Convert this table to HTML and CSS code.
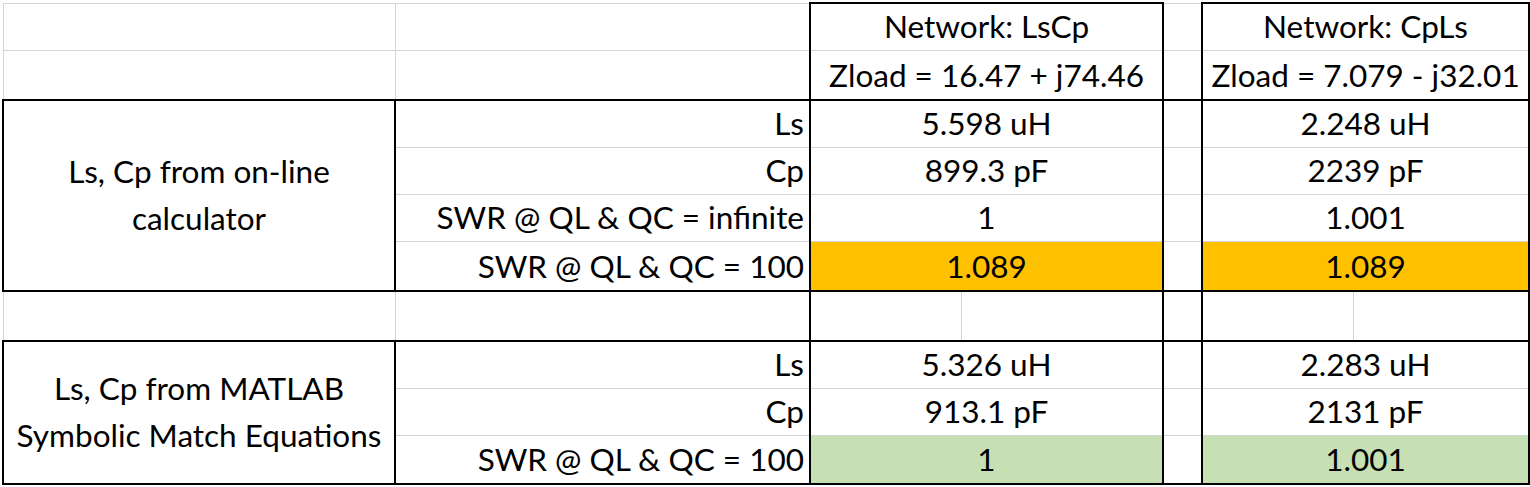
FILE: index.html
```html
<!DOCTYPE html>
<html lang="en">
<head>
<meta charset="utf-8">
<title>LsCp / CpLs match network comparison</title>
<link rel="stylesheet" href="styles.css">
</head>
<body>
<table class="sheet">
  <colgroup>
    <col class="col-a"><col class="col-b"><col class="col-c1"><col class="col-c2"><col class="col-d"><col class="col-e1"><col class="col-e2">
  </colgroup>
  <tbody>
    <tr class="h47">
      <td></td><td></td>
      <td colspan="2" class="val bx-top bx-side">Network: LsCp</td>
      <td></td>
      <td colspan="2" class="val bx-top bx-side">Network: CpLs</td>
    </tr>
    <tr class="h50 rule-bottom">
      <td></td><td></td>
      <td colspan="2" class="val bx-side">Zload = 16.47 + j74.46</td>
      <td></td>
      <td colspan="2" class="val bx-side">Zload = 7.079 - j32.01</td>
    </tr>
    <tr class="h47">
      <td rowspan="4" class="group">Ls, Cp from on-line<br>calculator</td>
      <td class="lbl">Ls</td>
      <td colspan="2" class="val bx-side">5.598 uH</td>
      <td></td>
      <td colspan="2" class="val bx-side">2.248 uH</td>
    </tr>
    <tr class="h47">
      <td class="lbl">Cp</td>
      <td colspan="2" class="val bx-side">899.3 pF</td>
      <td></td>
      <td colspan="2" class="val bx-side">2239 pF</td>
    </tr>
    <tr class="h47">
      <td class="lbl">SWR @ QL &amp; QC = infinite</td>
      <td colspan="2" class="val bx-side">1</td>
      <td></td>
      <td colspan="2" class="val bx-side">1.001</td>
    </tr>
    <tr class="h50 rule-bottom">
      <td class="lbl">SWR @ QL &amp; QC = 100</td>
      <td colspan="2" class="val bx-side fill-orange">1.089</td>
      <td></td>
      <td colspan="2" class="val bx-side fill-orange">1.089</td>
    </tr>
    <tr class="h50 rule-bottom">
      <td></td><td></td>
      <td class="bx-left"></td><td class="bx-right"></td>
      <td></td>
      <td class="bx-left"></td><td class="bx-right"></td>
    </tr>
    <tr class="h47">
      <td rowspan="3" class="group">Ls, Cp from MATLAB<br>Symbolic Match Equations</td>
      <td class="lbl">Ls</td>
      <td colspan="2" class="val bx-side">5.326 uH</td>
      <td></td>
      <td colspan="2" class="val bx-side">2.283 uH</td>
    </tr>
    <tr class="h47">
      <td class="lbl">Cp</td>
      <td colspan="2" class="val bx-side">913.1 pF</td>
      <td></td>
      <td colspan="2" class="val bx-side">2131 pF</td>
    </tr>
    <tr class="h49 rule-bottom">
      <td class="lbl">SWR @ QL &amp; QC = 100</td>
      <td colspan="2" class="val bx-side fill-green">1</td>
      <td></td>
      <td colspan="2" class="val bx-side fill-green">1.001</td>
    </tr>
  </tbody>
</table>
</body>
</html>
```

FILE: styles.css
```css
html, body {
  margin: 0;
  padding: 0;
  background: #ffffff;
}

body {
  padding: 2px 0 0 2px;
}

.sheet {
  border-collapse: collapse;
  table-layout: fixed;
  width: 1526px;
  font-family: "Lato", "Liberation Sans", sans-serif;
  font-size: 31.5px;
  color: #000000;
}

.col-a { width: 392px; }
.col-b { width: 415px; }
.col-c1 { width: 151px; }
.col-c2 { width: 202px; }
.col-d { width: 39px; }
.col-e1 { width: 151px; }
.col-e2 { width: 176px; }

.sheet td {
  box-sizing: border-box;
  border: 1px solid #d4d4d4;
  padding: 0 5px 6px 5px;
  line-height: 36px;
  vertical-align: bottom;
  white-space: nowrap;
  overflow: hidden;
}

.h47 td { height: 47px; }
.h49 td { height: 49px; }
.h50 td { height: 50px; }

.sheet .val {
  text-align: center;
}

.sheet .lbl {
  text-align: right;
  border-right: 2px solid #000000;
}

.sheet .group {
  text-align: center;
  vertical-align: middle;
  line-height: 47px;
  padding: 0 4px 2px 4px;
  border: 2px solid #000000;
}

.sheet .bx-top { border-top: 2px solid #000000; }
.sheet .bx-side { border-left: 2px solid #000000; border-right: 2px solid #000000; }
.sheet .bx-left { border-left: 2px solid #000000; }
.sheet .bx-right { border-right: 2px solid #000000; }

.sheet .rule-bottom td { border-bottom: 2px solid #000000; }

.fill-orange { background: #ffc000; }
.fill-green { background: #c6e0b4; }
```
